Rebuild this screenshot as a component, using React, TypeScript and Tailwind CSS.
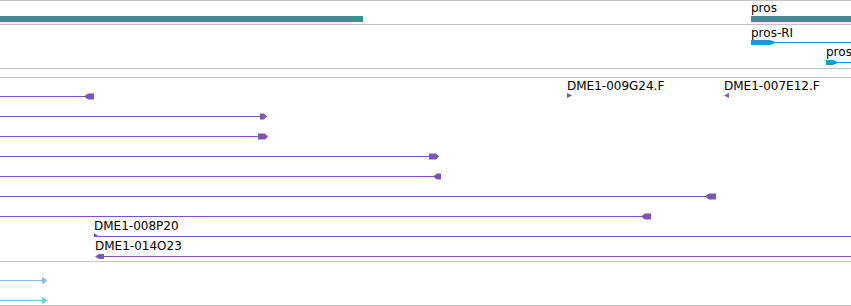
import React from "react";

type Dir = "L" | "R";

interface Feat {
  y: number;
  x1: number;
  x2: number;
  head?: { dir: Dir; from: number; to: number; tip: number; half?: number };
}

const PURPLE = "#7b56b3";
const BLUE = "#88bde2";

// polygon for a strand arrow head, centred on the feature line
function headPoints(y: number, h: { dir: Dir; from: number; to: number; tip: number; half?: number }) {
  const c = y + 0.5;
  const half = h.half ?? 3;
  const top = c - half;
  const bot = c + half;
  if (h.dir === "R") {
    return `${h.from},${top} ${h.to - h.tip},${top} ${h.to},${c} ${h.to - h.tip},${bot} ${h.from},${bot}`;
  }
  return `${h.from},${c} ${h.from + h.tip},${top} ${h.to},${top} ${h.to},${bot} ${h.from + h.tip},${bot}`;
}

function FeatureLayer({ feats, color, height }: { feats: Feat[]; color: string; height: number }) {
  return (
    <svg className="absolute left-0 top-0" width={851} height={height}>
      {feats.map((f, i) => (
        <g key={i}>
          <line x1={f.x1} x2={f.x2} y1={f.y + 0.5} y2={f.y + 0.5} stroke={color} strokeWidth={1} />
          {f.head && <polygon points={headPoints(f.y, f.head)} fill={color} />}
        </g>
      ))}
    </svg>
  );
}

function Label({ x, y, children }: { x: number; y: number; children: React.ReactNode }) {
  return (
    <span
      className="absolute whitespace-nowrap font-['DejaVu_Sans',sans-serif] text-[12px] leading-[14px] text-black"
      style={{ left: x, top: y }}
    >
      {children}
    </span>
  );
}

function Sep() {
  return <div className="h-px w-full bg-[#c3c3c3]" />;
}

const cloneFeats: Feat[] = [
  { y: 18, x1: 0, x2: 86, head: { dir: "L", from: 84, to: 94, tip: 4 } },
  { y: 38, x1: 0, x2: 262, head: { dir: "R", from: 260, to: 267, tip: 3 } },
  { y: 58, x1: 0, x2: 260, head: { dir: "R", from: 258, to: 268, tip: 3 } },
  { y: 78, x1: 0, x2: 432, head: { dir: "R", from: 429, to: 439, tip: 3 } },
  { y: 98, x1: 0, x2: 436, head: { dir: "L", from: 433, to: 441, tip: 4 } },
  { y: 118, x1: 0, x2: 708, head: { dir: "L", from: 705, to: 716, tip: 4 } },
  { y: 138, x1: 0, x2: 644, head: { dir: "L", from: 641, to: 651, tip: 4 } },
  { y: 158, x1: 94, x2: 851 },
  { y: 178, x1: 97, x2: 851, head: { dir: "L", from: 95, to: 104, tip: 4, half: 2.5 } },
];

const estFeats: Feat[] = [
  { y: 18, x1: 0, x2: 43, head: { dir: "R", from: 42, to: 47, tip: 3 } },
  { y: 38, x1: 0, x2: 43, head: { dir: "R", from: 42, to: 47, tip: 3 } },
];

export default function App() {
  return (
    <div className="w-[851px] h-[306px] overflow-hidden bg-white">
      <Sep />

      {/* gene span track */}
      <div className="relative h-[23px]">
        <div className="absolute left-0 top-[15px] h-[6px] w-[363px] bg-[#3f8f92]" />
        <div className="absolute left-[751px] top-[15px] h-[6px] w-[100px] bg-[#3f8f92]" />
        <Label x={751} y={0}>pros</Label>
      </div>
      <Sep />

      {/* transcripts */}
      <div className="relative h-[43px]">
        <svg className="absolute left-0 top-0" width={851} height={43}>
          <line x1={776} x2={851} y1={17.5} y2={17.5} stroke="#1b9cbf" strokeWidth={1} />
          <polygon points="751,15 770,15 777,17.5 770,20 751,20" fill="#1b9cbf" />
          <line x1={838} x2={851} y1={37.5} y2={37.5} stroke="#1b9cbf" strokeWidth={1} />
          <polygon points="826,35 833,35 839,37.5 833,40 826,40" fill="#1b9cbf" />
        </svg>
        <Label x={751} y={1}>pros-RI</Label>
        <Label x={826} y={20}>pros</Label>
      </div>
      <Sep />

      <div className="h-[8px]" />
      <Sep />

      {/* BAC / clone ends */}
      <div className="relative h-[183px]">
        <FeatureLayer feats={cloneFeats} color={PURPLE} height={183} />
        <svg className="absolute left-0 top-0" width={851} height={183}>
          <polygon points="567,15 572,17.5 567,20" fill={PURPLE} />
          <polygon points="729,15 724,17.5 729,20" fill={PURPLE} />
          <polygon points="94,155 98,157.5 94,159" fill={PURPLE} />
        </svg>
        <Label x={567} y={1}>DME1-009G24.F</Label>
        <Label x={724} y={1}>DME1-007E12.F</Label>
        <Label x={94} y={141}>DME1-008P20</Label>
        <Label x={95} y={161}>DME1-014O23</Label>
      </div>
      <Sep />

      {/* ESTs */}
      <div className="relative h-[43px]">
        <FeatureLayer feats={estFeats} color={BLUE} height={43} />
      </div>
      <Sep />
    </div>
  );
}
